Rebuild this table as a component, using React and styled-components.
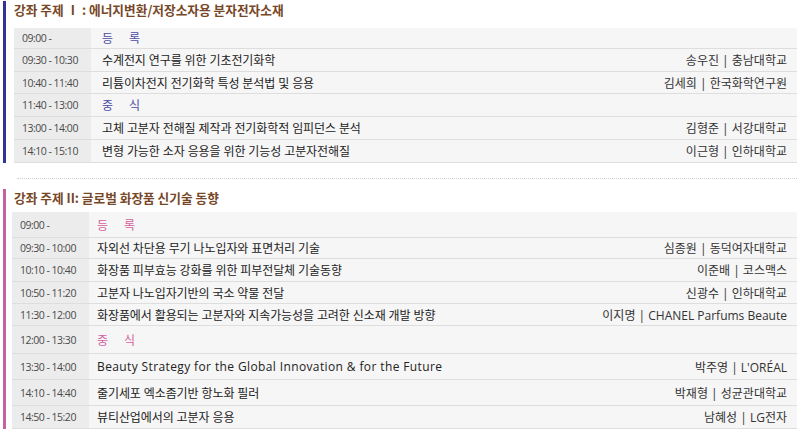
import React from "react";
import styled, { createGlobalStyle } from "styled-components";

const Global = createGlobalStyle`
  html, body { margin: 0; padding: 0; background: #ffffff; }
  body { font-family: "Open Sans", "Noto Sans CJK KR", sans-serif; color: #222; }
`;

const Page = styled.div`
  width: 801px;
  padding: 1px 4px 0 3px;
  box-sizing: border-box;
`;

const Section = styled.section`
  border-left: 3px solid ${(p) => p.$bar};
  padding-left: ${(p) => p.$inset}px;
`;

const Title = styled.h2`
  margin: 0 0 ${(p) => p.$gap}px ${(p) => 8 - p.$inset}px;
  font-family: "Noto Sans CJK KR", sans-serif;
  font-size: 12.7px;
  line-height: 18px;
  font-weight: 700;
  color: #774727;
`;

const Table = styled.div`
  display: flex;
  flex-direction: column;
`;

const Row = styled.div`
  display: grid;
  grid-template-columns: 77px 1fr auto;
  align-items: center;
  height: ${(p) => p.$h}px;
  box-sizing: border-box;
  border-bottom: 1px solid #dedede;
  background: #f6f6f6;
`;

const Time = styled.div`
  height: 100%;
  display: flex;
  align-items: center;
  padding-left: 8px;
  background: #ececec;
  font-size: 10.5px;
  letter-spacing: -0.5px;
  color: #4a4a4a;
  white-space: nowrap;
`;

const Topic = styled.div`
  padding-left: ${(p) => p.$pad}px;
  font-size: 12px;
  white-space: nowrap;
  letter-spacing: ${(p) => (p.$break ? "16px" : p.$latin ? "0.38px" : "-0.1px")};
  color: ${(p) => (p.$break ? p.$accent : "#222")};
`;

const Speaker = styled.div`
  padding-right: 10px;
  font-size: 12px;
  color: #333;
  white-space: nowrap;
`;

const Divider = styled.hr`
  margin: 15px 0 10px 14px;
  border: 0;
  border-top: 1px dotted #cfcfcf;
  height: 0;
`;

const sessions = [
  {
    title: "강좌 주제 Ⅰ : 에너지변환/저장소자용 분자전자소재",
    bar: "#33348f",
    accent: "#4b4ba6",
    inset: 8,
    pad: 11,
    gap: 9,
    rows: [
      { t: "09:00 -", s: "등록", brk: true, h: 21 },
      { t: "09:30 - 10:30", s: "수계전지 연구를 위한 기초전기화학", p: "송우진 | 충남대학교", h: 23 },
      { t: "10:40 - 11:40", s: "리튬이차전지 전기화학 특성 분석법 및 응용", p: "김세희 | 한국화학연구원", h: 22 },
      { t: "11:40 - 13:00", s: "중식", brk: true, h: 23 },
      { t: "13:00 - 14:00", s: "고체 고분자 전해질 제작과 전기화학적 임피던스 분석", p: "김형준 | 서강대학교", h: 23 },
      { t: "14:10 - 15:10", s: "변형 가능한 소자 응용을 위한 기능성 고분자전해질", p: "이근형 | 인하대학교", h: 23 },
    ],
  },
  {
    title: "강좌 주제 II: 글로벌 화장품 신기술 동향",
    bar: "#c4639f",
    accent: "#d4609f",
    inset: 6,
    pad: 8,
    gap: 5,
    rows: [
      { t: "09:00 -", s: "등록", brk: true, h: 26 },
      { t: "09:30 - 10:00", s: "자외선 차단용 무기 나노입자와 표면처리 기술", p: "심종원 | 동덕여자대학교", h: 21 },
      { t: "10:10 - 10:40", s: "화장품 피부효능 강화를 위한 피부전달체 기술동향", p: "이준배 | 코스맥스", h: 23 },
      { t: "10:50 - 11:20", s: "고분자 나노입자기반의 국소 약물 전달", p: "신광수 | 인하대학교", h: 22 },
      { t: "11:30 - 12:00", s: "화장품에서 활용되는 고분자와 지속가능성을 고려한 신소재 개발 방향", p: "이지명 | CHANEL Parfums Beaute", h: 22 },
      { t: "12:00 - 13:30", s: "중식", brk: true, h: 28 },
      { t: "13:30 - 14:00", s: "Beauty Strategy for the Global Innovation & for the Future", p: "박주영 | L'ORÉAL", h: 26, latin: true },
      { t: "14:10 - 14:40", s: "줄기세포 엑소좀기반 항노화 필러", p: "박재형 | 성균관대학교", h: 26 },
      { t: "14:50 - 15:20", s: "뷰티산업에서의 고분자 응용", p: "남혜성 | LG전자", h: 23 },
    ],
  },
];

function Session({ data }) {
  return (
    <Section $bar={data.bar} $inset={data.inset}>
      <Title $gap={data.gap} $inset={data.inset}>{data.title}</Title>
      <Table>
        {data.rows.map((r, i) => (
          <Row key={i} $h={r.h}>
            <Time>{r.t}</Time>
            <Topic $pad={data.pad} $break={r.brk} $latin={r.latin} $accent={data.accent}>
              {r.s}
            </Topic>
            <Speaker>{r.p || ""}</Speaker>
          </Row>
        ))}
      </Table>
    </Section>
  );
}

export default function App() {
  return (
    <>
      <Global />
      <Page>
        <Session data={sessions[0]} />
        <Divider />
        <Session data={sessions[1]} />
      </Page>
    </>
  );
}
